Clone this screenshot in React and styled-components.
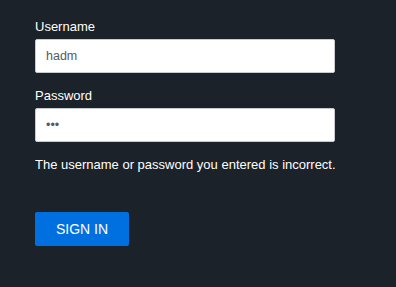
import React from 'react'
import styled, { createGlobalStyle } from 'styled-components'

const GlobalStyle = createGlobalStyle`
  html, body {
    margin: 0;
    background: #1c2229;
  }
  body {
    font-family: 'Liberation Sans', Arial, sans-serif;
  }
`

const Page = styled.div`
  min-height: 287px;
  padding: 19px 0 0 35px;
  box-sizing: border-box;
`

const Form = styled.form`
  width: 300px;
  display: flex;
  flex-direction: column;
`

const Field = styled.div`
  display: flex;
  flex-direction: column;
  gap: 5px;
  margin-bottom: 15px;
`

const Label = styled.label`
  font-size: 13px;
  line-height: 15px;
  color: #ffffff;
`

const Input = styled.input`
  box-sizing: border-box;
  height: 34px;
  width: 100%;
  padding: 0 10px;
  border: 1px solid #c8ccd2;
  border-radius: 2px;
  background: #ffffff;
  color: #555a60;
  font-family: 'Liberation Sans', Arial, sans-serif;
  font-size: 12.5px;
  outline: none;
`

const Error = styled.p`
  margin: 0;
  font-size: 13px;
  line-height: 15px;
  color: #ffffff;
  white-space: nowrap;
`

const Button = styled.button`
  align-self: flex-start;
  margin-top: 40px;
  height: 34px;
  width: 94px;
  padding: 0;
  border: none;
  border-radius: 2px;
  background: #0070e0;
  color: #ffffff;
  font-family: 'Liberation Sans', Arial, sans-serif;
  font-size: 14px;
  cursor: pointer;
`

const App = () => {
  return (
    <Page>
      <GlobalStyle />
      <Form onSubmit={(e) => e.preventDefault()}>
        <Field>
          <Label>Username</Label>
          <Input defaultValue="hadm" />
        </Field>
        <Field>
          <Label>Password</Label>
          <Input type="password" defaultValue="abc" />
        </Field>
        <Error>The username or password you entered is incorrect.</Error>
        <Button type="submit">SIGN IN</Button>
      </Form>
    </Page>
  )
}

export default App
